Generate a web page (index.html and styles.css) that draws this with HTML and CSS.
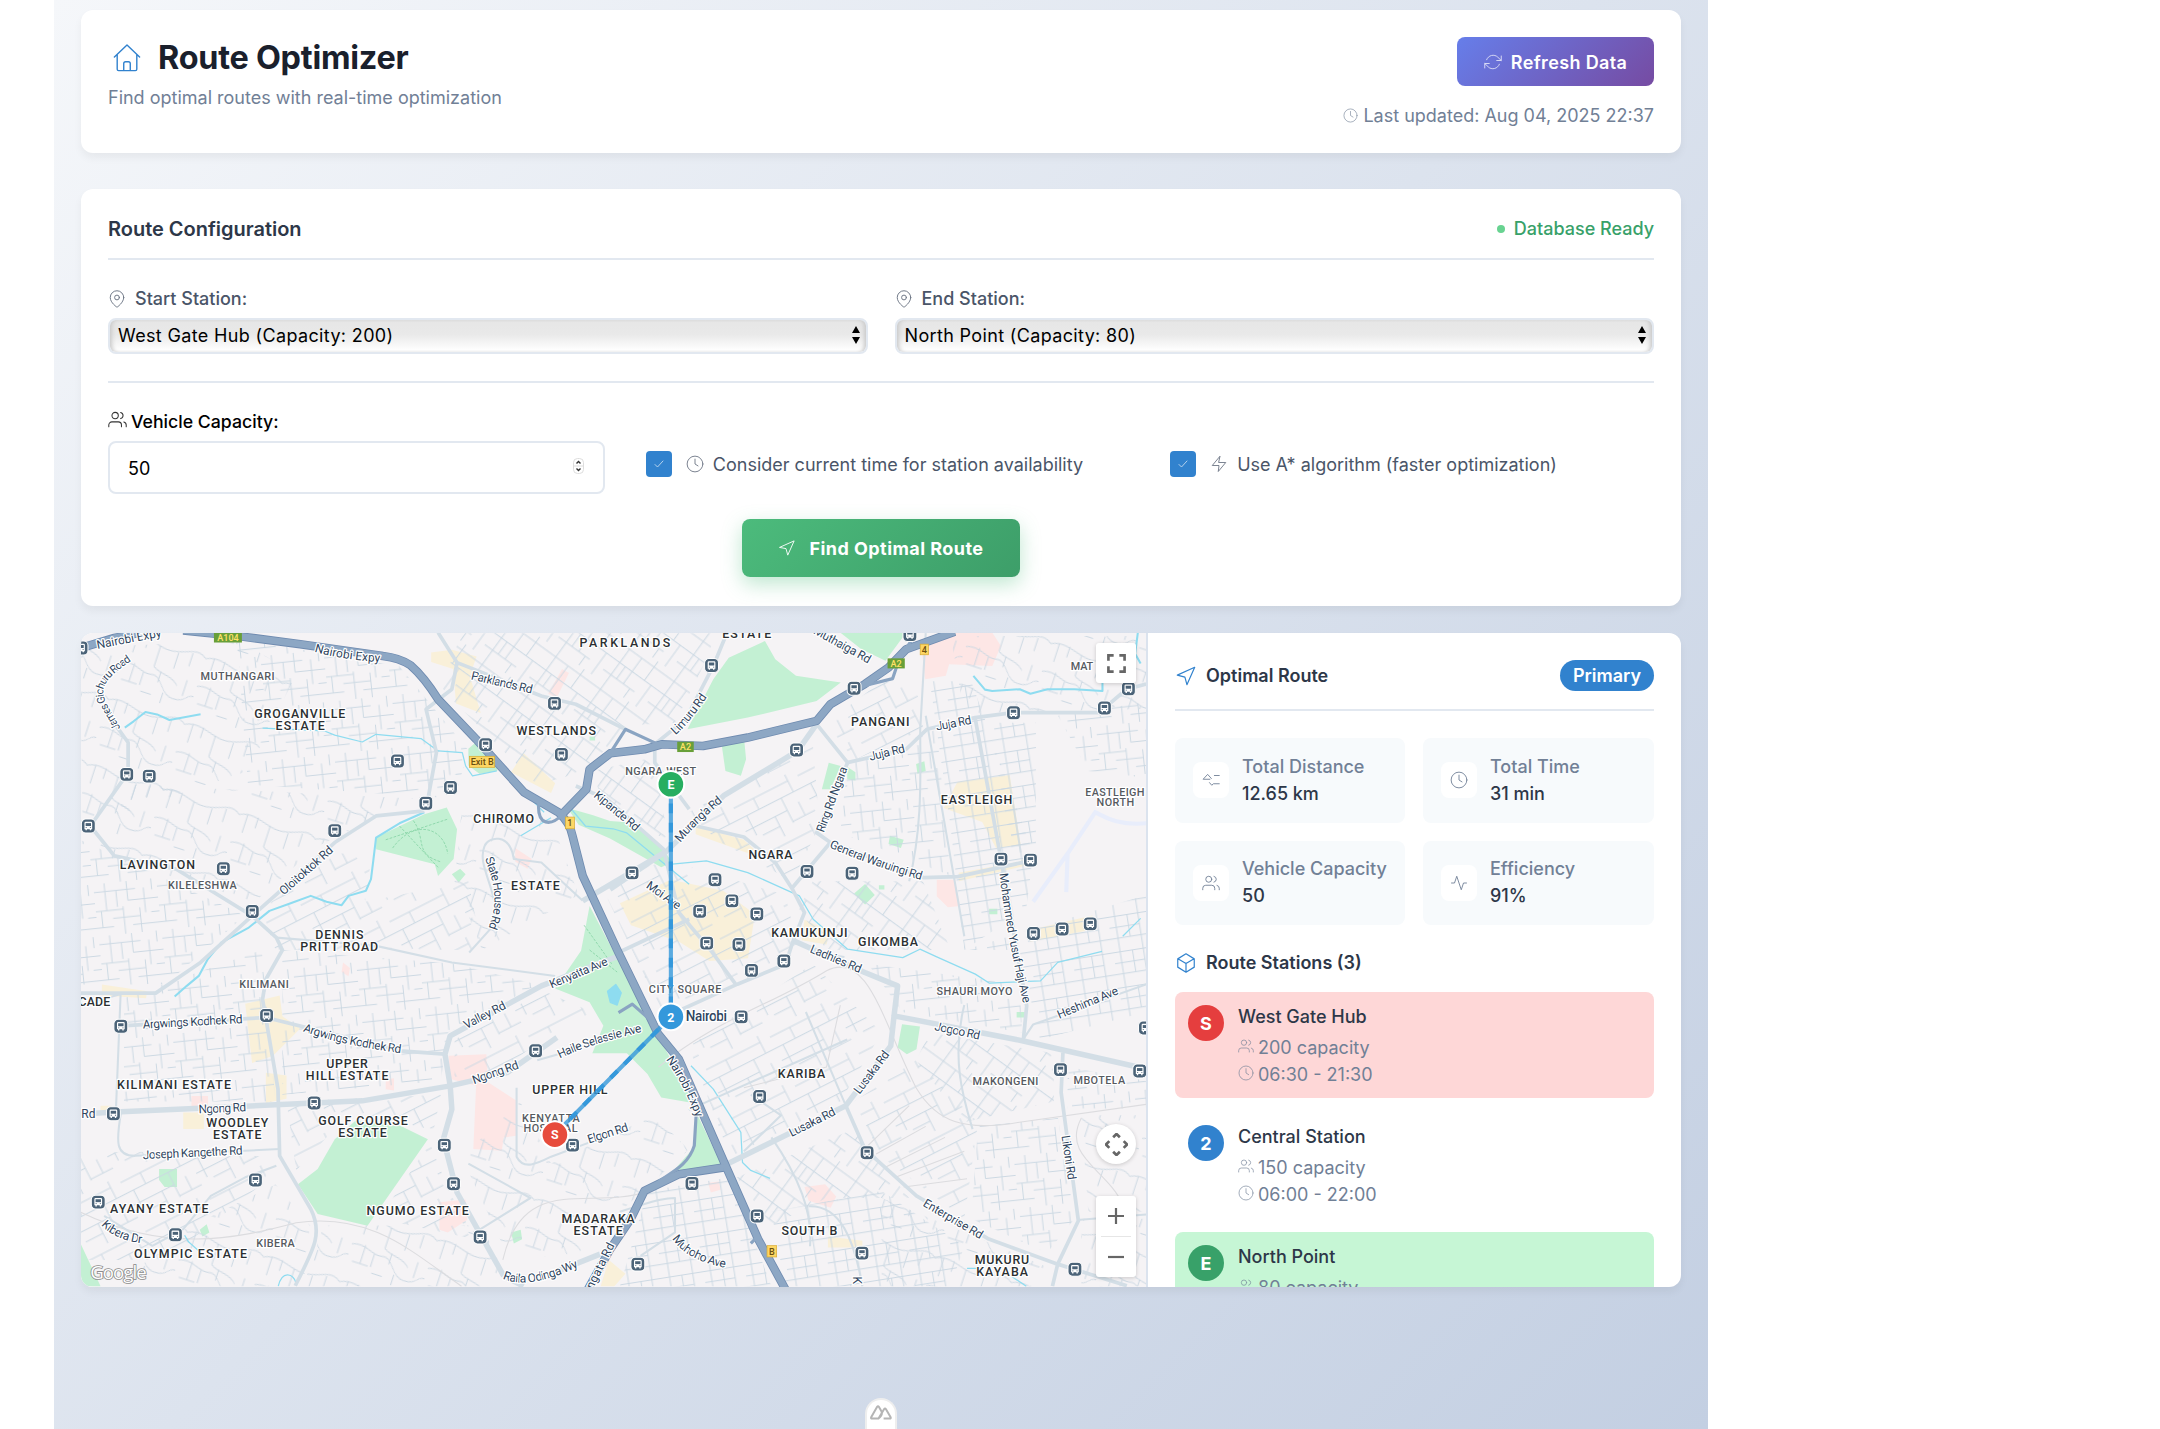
FILE: index.html
```html
<!DOCTYPE html>
<html lang="en">
<head>
<meta charset="utf-8">
<title>Route Optimizer</title>
<link rel="stylesheet" href="styles.css">
</head>
<body>
<svg class="sprite" aria-hidden="true">
  <symbol id="i-home" viewBox="0 0 30 30"><path d="M1.5 14 15 1l13.500 13M4.500 11.500V27a1.500 1.500 0 0 0 1.500 1.500h18a1.500 1.500 0 0 0 1.500-1.500V11.500M11.500 28.500V21a2 2 0 0 1 2-2h3a2 2 0 0 1 2 2v7.500"/></symbol>
  <symbol id="i-refresh" viewBox="0 0 24 24"><path d="M23 4v6h-6M1 20v-6h6M3.500 9a9 9 0 0 1 14.900-3.400L23 10M1 14l4.600 4.400A9 9 0 0 0 20.500 15"/></symbol>
  <symbol id="i-clock" viewBox="0 0 24 24"><circle cx="12" cy="12" r="10.500"/><path d="M12 5.500V12l4 2.500"/></symbol>
  <symbol id="i-pin" viewBox="0 0 24 24"><path d="M21 10c0 7-9 13-9 13s-9-6-9-13a9 9 0 0 1 18 0z"/><circle cx="12" cy="10" r="3.200"/></symbol>
  <symbol id="i-users" viewBox="0 0 24 24"><path d="M17 21v-2a4 4 0 0 0-4-4H5a4 4 0 0 0-4 4v2M23 21v-2a4 4 0 0 0-3-3.870M16 3.130a4 4 0 0 1 0 7.750"/><circle cx="9" cy="7" r="4"/></symbol>
  <symbol id="i-bolt" viewBox="0 0 24 24"><path d="M13 2 3 14h9l-1 8 10-12h-9z"/></symbol>
  <symbol id="i-nav" viewBox="0 0 24 24"><path d="m2.500 11 19-8.500-8.500 19-2.200-8.200z"/></symbol>
  <symbol id="i-check" viewBox="0 0 24 24"><path d="m4 13 5 5L20 6"/></symbol>
  <symbol id="i-box" viewBox="0 0 24 24"><path d="M21 16.500v-9L12 2 3 7.500v9L12 22zM3.200 7.300 12 12.500l8.800-5.200M12 22v-9.500"/></symbol>
  <symbol id="i-pulse" viewBox="0 0 24 24"><path d="M22 12h-4l-3 9L9 3l-3 9H2"/></symbol>
  <symbol id="i-distance" viewBox="0 0 24 24"><path d="M10.500 11H1.500L7.500 4.500l5 5.500M16.500 6H23M10 15.500l3 3.500 2.200-2H23"/></symbol>
</svg>

<main class="app">
  <header class="card head">
    <div>
      <h1 class="title"><svg class="ico ico-home"><use href="#i-home"/></svg>Route Optimizer</h1>
      <p class="subtitle">Find optimal routes with real-time optimization</p>
    </div>
    <div class="head-side">
      <button class="btn btn-refresh"><svg class="ico"><use href="#i-refresh"/></svg>Refresh Data</button>
      <p class="updated"><svg class="ico"><use href="#i-clock"/></svg>Last updated: Aug 04, 2025 22:37</p>
    </div>
  </header>

  <section class="card config">
    <div class="config-head">
      <h2>Route Configuration</h2>
      <span class="ready"><i class="dot"></i>Database Ready</span>
    </div>
    <div class="stations">
      <div class="field">
        <span class="label"><svg class="ico"><use href="#i-pin"/></svg>Start Station:</span>
        <div class="select">West Gate Hub (Capacity: 200)<svg class="arrows" viewBox="0 0 8 18"><path d="M4 0l4 7H0zM4 18l4-7H0z"/></svg></div>
      </div>
      <div class="field">
        <span class="label"><svg class="ico"><use href="#i-pin"/></svg>End Station:</span>
        <div class="select">North Point (Capacity: 80)<svg class="arrows" viewBox="0 0 8 18"><path d="M4 0l4 7H0zM4 18l4-7H0z"/></svg></div>
      </div>
    </div>
    <div class="options">
      <div class="field">
        <span class="label label-dark"><svg class="ico"><use href="#i-users"/></svg>Vehicle Capacity:</span>
        <div class="number">50<svg class="spin" viewBox="0 0 11 16"><rect x=".5" y=".5" width="10" height="15" rx="4"/><path class="mid" d="M1 8h9"/><path d="M3.500 5.500l2-2 2 2M3.500 10.500l2 2 2-2"/></svg></div>
      </div>
      <label class="check"><span class="tick"><svg class="ico"><use href="#i-check"/></svg></span><svg class="ico"><use href="#i-clock"/></svg>Consider current time for station availability</label>
      <label class="check"><span class="tick"><svg class="ico"><use href="#i-check"/></svg></span><svg class="ico"><use href="#i-bolt"/></svg>Use A* algorithm (faster optimization)</label>
    </div>
    <button class="btn btn-find"><svg class="ico"><use href="#i-nav"/></svg>Find Optimal Route</button>
  </section>

  <section class="result">
    <div class="map">
      <svg class="map-canvas" viewBox="58.800 459.900 773.100 474.700" preserveAspectRatio="none">
        <defs>
          <pattern id="st-a" width="46" height="38" patternUnits="userSpaceOnUse" patternTransform="rotate(-6)"><path d="M0 6h30M8 0v20M16 6v12M24 0v14h22M36 6v18M0 20h20M4 20v12M20 18v20M12 26h20M32 20v18M40 24h6M26 32h20M0 32h12M42 0v8"/></pattern>
          <pattern id="st-b" width="40" height="36" patternUnits="userSpaceOnUse" patternTransform="rotate(36)"><path d="M0 5h40M0 17h40M0 28h28M7 0v36M18 5v23M29 0v17M35 17v19M12 17v11M24 28v8"/></pattern>
          <pattern id="st-c" width="58" height="50" patternUnits="userSpaceOnUse" patternTransform="rotate(18)"><path d="M0 9c12-6 22 4 34 2s16-8 24-2M6 7v14M14 7v8M24 10v16c6 4 14 2 20 8M38 11v12M48 8v10M0 30c10-4 16 4 24 2s10 12 20 12 8-6 14-6M10 28v14M18 32v10M30 36v-8M36 42v8M50 40v-12M4 42h12M28 46h-8"/></pattern>
          <pattern id="st-d" width="30" height="26" patternUnits="userSpaceOnUse" patternTransform="rotate(-9)"><path d="M0 4h30M0 12h22M0 20h30M5 0v26M14 4v16M22 0v26"/></pattern>
          <pattern id="st-e" width="52" height="40" patternUnits="userSpaceOnUse" patternTransform="rotate(-27)"><path d="M0 5h44M0 14h52M6 14v16M0 24h34M16 5v9M24 24v16M34 14v20M44 0v14M34 33h18M10 32h14M44 22v11"/></pattern>
          <g id="bus" transform="scale(.56) translate(-.5 -.5)"><rect x="1" y="1" width="18" height="18" rx="5.500" class="bus-bg"/><path class="bus-body" d="M6.500 4.500h7a1.500 1.500 0 0 1 1.500 1.500v8h-1.300v1.500h-1.800V14H8.100v1.500H6.300V14H5V6a1.500 1.500 0 0 1 1.500-1.500z"/><path class="bus-win" d="M6.500 6.200h7v3.800h-7z"/><path class="bus-win" d="M6.500 11.500h1.500v1H6.500zM12 11.500h1.500v1H12z"/></g>
        </defs>
        <rect class="land" x="58" y="459" width="775" height="476"/>

        <g class="shop">
          <path d="M313 474l15-2 18 5-5 14 8 27-18-7-2-25-16-5zM380 547l23 22-3 7-29-15zM450 656l37-17 38 8 23 17-5 32-28 2-22-14-35-12zM695 568l38-5 8 51-18 2-10-19-28-10zM696 634l44-8 8-6 0 8-52 12zM178 729l25-6 2 15 13 9-20 20-15 5zM193 779l15 2v17l-15 3zM74 715l33 5-1 5-32-2zM133 808h15v12h-15zM601 898l25 3v5h-25zM745 676l48-11 1 10-46 9zM584 668l18 8-2 10-18-3zM505 600l35 10 15 14-50-18zM73 803h8v6h-8zM442 915l12 10-8 9h-10z"/>
        </g>
        <g class="care">
          <path d="M669 471.700L692.800 459.600H720.300L726.600 469.300 720.300 483.800 689 482.600 686.600 491 671.600 493.500zM398 504l10-18 5 3-9 18zM325.600 766.800L353 765.600 354.300 786 375 799.500V824.900L365.600 826 364.300 835.700 343.600 834.500 345.600 788.600 326.800 783.700zM319 873l19-2 1 15-14 9-6-2zM584 862l15-2 8 9-4 8-16-5zM680 639h13l4 19-9 1-8-8zM374 616l12 8-3 7-9-5zM139 796h12v8h-12zM280 784l6-1v9l-6-1zM514 859l8-1 1 6-7 2zM249 699l5 4-1 6-5-3z"/>
        </g>
        <g class="park">
          <path d="M529 477.800L555.300 465.700 562.800 479 577.800 491 610.300 495.900 592.800 509.200 542.800 521.300 499 529.800 517.800 493.500zM610 459.600H657.800L642.800 480 625.300 471.700zM524 541.900L540.300 538.200 541.600 551.500 537.800 563.600 526.600 560zM273 608.400L308 591.500 324.300 586.600 331.800 602.300 329.300 624 318 636.200 315.600 627.700 273 616.900zM328 635l6-4 4 4-5 6zM428 658L450 700 478 752 500 795 503 801 480 797 470 780 455 765 430 765 438 745 428 728 403 718 421.800 690.600zM506.600 810.300L524 846.600 487.800 851.500 502.800 834.500zM412 587L430 592 442.800 596.300 457.800 597.500 480 614.400 487.800 626.500 480 630 442.800 609 420 599zM601.600 554L610.300 556.400 602.800 573.300 596.600 573.300zM615 557l6 4v6l-6-1zM243 827.300L258 814 290.600 817.600 310.600 827.300 266.800 890.200 230.600 881.700 216.300 860 230.600 849zM115.500 849h13v13h-9l-4-5zM58 902l15 32H58zM654.800 743.800L667.800 745.500 665.300 762 658.300 765.600 651.600 760.800zM646 607l10 3-2 6-9-3zM620 649l8-7 7 8-7 7zM665 555l6-2 1 7-6 2zM738 735h7v4h-7zM718 660h6v4h-6zM145 893l5-4 2 6-5 3zM340 544l7-6 14 14v8l-13 2-8-6zM371 895l7-2 1 7-6 3zM428 535h4v3h-4zM638 643h4v3h-4z"/>
        </g>
        <g class="streets">
          <path fill="url(#st-c)" d="M58 470L175 466 215 490 180 560 60 600z"/>
          <path fill="url(#st-a)" d="M172 464L290 484 340 545 330 580 180 570z"/>
          <path fill="url(#st-b)" d="M335 460H520L510 485 490 525 455 527 425 560 390 570 320 500z"/>
          <path fill="url(#st-c)" d="M95 570L300 580 230 615 185 655 70 620z"/>
          <path fill="url(#st-a)" d="M58 610L178 665 120 715H58z"/>
          <path fill="url(#st-e)" d="M190 660L245 620 270 620 265 655 340 640 350 690 200 690z"/>
          <path fill="url(#st-a)" d="M205 690L330 700 390 715 325 750 320 785 205 795z"/>
          <path fill="url(#st-a)" d="M90 725L190 690 200 800H90z"/>
          <path fill="url(#st-e)" d="M58 840L90 836 200 840 190 860 120 915H58z"/>
          <path fill="url(#st-c)" d="M120 900L200 860 225 890 220 934H90z"/>
          <path fill="url(#st-c)" d="M235 890L350 890 370 934H220z"/>
          <path fill="url(#st-e)" d="M208 800L320 795 315 820 250 812 215 850z"/>
          <path fill="url(#st-e)" d="M275 885L312 830 326 865 345 900z"/>
          <path fill="url(#st-e)" d="M330 755L395 720 430 735 400 750 360 780 330 782z"/>
          <path fill="url(#st-c)" d="M335 840L378 800 400 845 475 810 500 835 450 880 420 910 370 915z"/>
          <path fill="url(#st-c)" d="M335 590L400 595 420 650 350 690 330 640z"/>
          <path fill="url(#st-e)" d="M435 640L485 625 570 650 580 690 480 735z"/>
          <path fill="url(#st-b)" d="M430 560L475 550 485 610 440 590z"/>
          <path fill="url(#st-e)" d="M500 590L590 540 595 600 575 640 520 610z"/>
          <path fill="url(#st-b)" d="M590 640L670 640 690 690 600 690 580 660z"/>
          <path fill="url(#st-e)" d="M600 525L640 495 670 500 670 530 620 552z"/>
          <path fill="url(#st-a)" d="M615 555L680 530 690 636 610 605z"/>
          <path fill="url(#st-d)" d="M675 495H705L750 620 745 660 700 690 690 600z"/>
          <path fill="url(#st-c)" d="M690 462H832V515L700 518z"/>
          <path fill="url(#st-d)" d="M718 525L752 525 752 618 735 620z"/>
          <path fill="url(#st-a)" d="M768 520L832 510V565L790 560z"/>
          <path fill="url(#st-d)" d="M700 690L832 650V735L755 755 740 690z"/>
          <path fill="url(#st-a)" d="M630 700L740 715 742 750 655 735z"/>
          <path fill="url(#st-b)" d="M675 750L765 765V800L700 815 665 770z"/>
          <path fill="url(#st-e)" d="M500 760L590 700 640 750 610 800 530 840z"/>
          <path fill="url(#st-a)" d="M775 775L832 785V805H775z"/>
          <path fill="url(#st-e)" d="M620 800L665 770 710 815 700 885 640 840z"/>
          <path fill="url(#st-a)" d="M710 818L768 812 780 885 760 910 705 885z"/>
          <path fill="url(#st-b)" d="M535 855L620 820 660 870 600 870 560 890z"/>
          <path fill="url(#st-d)" d="M560 880L640 865 700 905 690 934 570 934z"/>
          <path fill="url(#st-d)" d="M470 865L530 855 560 934H450z"/>
          <path fill="url(#st-c)" d="M640 870L760 920 750 934H640zM785 885H832V934H785zM785 810H832V880H790z"/>
        </g>
        <g class="rail">
          <path d="M478 775C520 740 560 730 600 705 630 690 640 740 665 790 680 815 700 822 740 815L832 802M58 880C120 910 170 900 215 888 270 880 300 910 335 934M365 915C380 850 430 880 470 865M610 730L600 775 540 790M785 812C770 840 805 850 815 875"/>
          <path d="M630 832L660 803M636 838L672 818M642 848L686 826M650 855L700 836M656 862L702 856"/>
        </g>
        <g class="runway"><path d="M832 598C810 600 800 592 795 590L775 620 774 648M775 620L750 655"/></g>
        <g class="paths"><path d="M280 610L325 595M285 616C300 595 322 600 325 620M290 600L318 630M300 596C310 610 300 620 320 626M424 672L444 700M428 690L448 706"/></g>

        <g class="water">
          <path d="M90.600 528.600L97 524 105.600 517.200 114 519 123 523 145.600 518.900" class="w2"/>
          <path d="M190.600 529L235.600 531 243 534 263 539 273 533.400 305.600 536.500 318 545.500 335.600 546.700 338 556.400 343 563.600 360.600 560"/>
          <path class="w2" d="M308 590L290 598 273 608.400 271 625 269.300 638.600 265.600 647 253 650.700 248 657.500 237 655 225.600 650.700 211 656 195.600 661.600 180.600 673.700 160.600 684.600 150.600 697 144.300 708.800 135.600 716 126.800 723.700"/>
          <path class="w2" d="M706.600 491L715 501 720.300 502 740.300 500.700 748 504 760.300 500.700 780 500.700 800.300 502 800.300 496M826 459.500L824 475 828 482"/>
          <path d="M380 575L395 590M378 607L400 594M415 588L425 600 445 602 455 605 475.300 621.700 500.300 642.300M487.800 627.700L512.800 625.300 542.800 633.800 580.300 650.700 590.300 667.700 615.300 689.400 655.300 695.500 667.800 689.400 680 695 708 707.500 718 714 755.300 712.400 767.800 699 800 691M815 680L828 667"/>
          <path d="M501.600 774L517.800 791 537.800 822.400 539 844.200 545 850 559 855.800M134 897L137 902 145 909M202 934C205 922 213 925 215 932M702 921H712M733 926L745 934"/>
          <path class="pond" d="M441 720l6-5 4 6-3 9-5-2z"/>
        </g>

        <g class="roads thin">
          <path d="M340.600 691.800L358 672.500M358 672.500C365 650 345 630 351.800 614.400 354 608 370 604 373 624L393 626.500 423 654.300M88 807C84 830 84 839.400 98 839.400L203 834.500M200.600 846.600L178 855 153 868.400 133 892.600 110.600 904.700 75.600 883M87.600 720.800L84 810M200.600 681L273 687 328 699 403 708.800M540 836L567 810 545 795M560 826C580 855 590 880 588 905M587 876C610 875 620 900 626 934M500 806L615 755M585 735L614 803M375 790V840C380 850 390 845 400 840L427 830M450 880C480 870 485 870 490 870V895L465 912M390 770L404 766 440 755M340 845L385 870 345 895M58 730L88 722M742 756L750 744 832 715M700 730C690 770 700 800 706 820M660 640C670 600 668 560 668 530L672 460M782 886L832 882M672 520L700 680M592 692L613 695"/>
        </g>
        <g class="roads">
          <path d="M84.300 527.300L93 539.400V561.200L65.600 600 83 621.700 128 631.400 183 665.200 200.600 681 205 690 193 711.200 190.600 725.700 201.800 791 203 839.400 225.600 878 C234 895 229 905 214.300 933.700"/>
          <path d="M308 589L273 592.700 243 612 183 665.200 145.600 699 113 721.300H58"/>
          <path d="M318 459.600L331.800 481.400 328 500.700 309.300 515.300 316.800 546.700 309.300 587.800M331.800 481.400L393 505.600 418 511.600 454 529.800"/>
          <path d="M527.800 459.600L517.800 483.800 497.800 522.500 475.300 540.700V554L500.300 587.800"/>
          <path class="wide" d="M592.800 526L579 545.500 525.300 578 482.800 619.300M442.800 645.900L481 620 423 654.300"/>
          <path d="M418 571L440 580 481.600 616.800 492.800 662.800 515.300 689.400 534 714.800M449 691.800L500.300 667.700M490 735.400L535.300 714.800 570.300 700.300 575.300 684.600 584 662.800 575.300 645.900 562.800 626.500 540 608 505.300 600M575 645L602.800 612 592.800 604.800 615.300 554 592.800 526"/>
          <path d="M615 554L657.800 544.300 672.800 529.800 707.800 521.300 735.300 517.700H797.800L817.800 500.700 832 497M602.800 612L670.300 637.400 695.300 636.700 747.800 625.300"/>
          <path d="M707.800 521.300L726.600 624 745.300 730.500 742.800 756"/>
          <path class="wide" d="M576.500 683.400L627.800 706.300 651.600 716 649 737.800 742.800 756 832.800 776.500M649 737.800L646.600 759.600 614 803 525.300 846.600"/>
          <path d="M614 803L627.800 834.500 665.300 868.400 717.800 899.800 767.800 918 818 933.700M771.600 764.400L770.300 793.400 782.800 886.500 767.800 918 764 934"/>
          <path class="wide" d="M58 809L88 807.400 263 799.500 326.800 788.600 368 779 404.300 753.500"/>
          <path d="M88 745L193 739 290.600 763.200 323 765.600"/>
          <path class="wide" d="M450 694L393 716 326.800 752.300 323 765.600 326.800 788.600 328 805.500 321.800 827.300 331.800 866 365.600 926.500M365.600 926.500L380 934M400 925L435.600 910.700"/>
        </g>
        <g class="hwy-edge">
          <path id="hwy" d="M58 471L83 463.500 110 458M133 458L175.600 462.500 218 468 278 476.600Q290 478 298 483.300 308 492 318 508L345.600 537 380.600 575.700 405.600 590.200Q414 598 415.600 607.200L423 636.200 447.800 689.400 477.800 751 492.800 769.200 527.800 849 550.300 899.800 570 936"/>
          <path id="hwy2" d="M408 591.400L425.600 573.300 428 558.800 443 547.200 467.800 544.300 480.300 540.700 510.300 541.900 542.800 535.800 592.800 523.700 602.800 511.600 627.800 497 645 485 657.800 471.700 693 459M525.300 847.800L492.800 852.700 467.800 864.800 457.800 885.300 443 907 427 936"/>
          <path class="slim" d="M444 545.500L454 529.800 477.800 540.700M505.300 810.300L504 832C500 845 490 850 478 858M449 735.400L459 729.300 472.800 741.400M628 498L648 493 653 478 664 462M391 584C390 600 400 600 408 592M550 898L545 903"/>
        </g>
        <g class="hwy">
          <use href="#hwy"/><use href="#hwy2"/>
        </g>

        <g class="stops">
          <use href="#bus" x="53.500" y="465.500"/><use href="#bus" x="86.700" y="557.200"/><use href="#bus" x="103" y="558.500"/><use href="#bus" x="58.800" y="594.700"/><use href="#bus" x="156.800" y="625.700"/><use href="#bus" x="177.800" y="656.700"/><use href="#bus" x="237.700" y="598"/><use href="#bus" x="283.200" y="547.500"/><use href="#bus" x="303.800" y="578.200"/><use href="#bus" x="321.700" y="566.700"/><use href="#bus" x="347.200" y="535.700"/><use href="#bus" x="397.200" y="505.700"/><use href="#bus" x="402.200" y="542.700"/>
          <use href="#bus" x="511.200" y="478.200"/><use href="#bus" x="655.200" y="455.700"/><use href="#bus" x="614.700" y="494.700"/><use href="#bus" x="572.900" y="539.500"/><use href="#bus" x="730.400" y="512.500"/><use href="#bus" x="796.400" y="509"/><use href="#bus" x="813.800" y="495"/><use href="#bus" x="453.500" y="628.700"/><use href="#bus" x="513.700" y="633.700"/><use href="#bus" x="502.600" y="656.500"/><use href="#bus" x="526" y="649"/><use href="#bus" x="544.100" y="658.500"/><use href="#bus" x="580.500" y="627.700"/><use href="#bus" x="613.200" y="629"/><use href="#bus" x="721.300" y="618.700"/><use href="#bus" x="742.700" y="619.400"/><use href="#bus" x="507.700" y="679.700"/><use href="#bus" x="531.100" y="680.700"/><use href="#bus" x="563.700" y="692.700"/><use href="#bus" x="540.200" y="699.500"/><use href="#bus" x="744.900" y="672.700"/><use href="#bus" x="765.700" y="669.400"/><use href="#bus" x="786.100" y="665.700"/><use href="#bus" x="532.700" y="733.200"/>
          <use href="#bus" x="82.400" y="740"/><use href="#bus" x="188.200" y="732.200"/><use href="#bus" x="77" y="803.500"/><use href="#bus" x="222.700" y="795.700"/><use href="#bus" x="383.500" y="757.800"/><use href="#bus" x="317.200" y="826.300"/><use href="#bus" x="410.300" y="826.300"/><use href="#bus" x="323.900" y="854.300"/><use href="#bus" x="180.100" y="851.600"/><use href="#bus" x="66" y="867.700"/><use href="#bus" x="122" y="891.400"/><use href="#bus" x="343.200" y="893"/>
          <use href="#bus" x="546.100" y="791"/><use href="#bus" x="497" y="854.200"/><use href="#bus" x="544.300" y="877.700"/><use href="#bus" x="624.100" y="831.800"/><use href="#bus" x="764.500" y="771.500"/><use href="#bus" x="822" y="772.500"/><use href="#bus" x="826.200" y="741.300"/><use href="#bus" x="457.700" y="912.700"/><use href="#bus" x="620.400" y="904.700"/><use href="#bus" x="775" y="916.400"/>
        </g>

        <g class="labels">
          <text x="420.600" y="469.800" textLength="66">PARKLANDS</text><text x="524.300" y="463.500" textLength="35.500">ESTATE</text>
          <text x="184.600" y="521.800" textLength="66">GROGANVILLE</text><text x="200" y="530.500" textLength="35.800">ESTATE</text>
          <text x="375" y="534.100" textLength="57.600">WESTLANDS</text><text x="343.600" y="598" textLength="44">CHIROMO</text>
          <text x="87" y="630.900" textLength="54.600">LAVINGTON</text><text x="371" y="646.600" textLength="35.300">ESTATE</text>
          <text x="228.800" y="681.700" textLength="35">DENNIS</text><text x="218" y="690.400" textLength="56.500">PRITT ROAD</text>
          <text x="617.800" y="527.600" textLength="42.500">PANGANI</text><text x="683" y="583.700" textLength="51.800">EASTLEIGH</text>
          <text x="543.300" y="624.100" textLength="32">NGARA</text><text x="559.800" y="680.200" textLength="55.500">KAMUKUNJI</text>
          <text x="622.800" y="687.200" textLength="43.500">GIKOMBA</text><text x="57" y="730.800" textLength="23">CADE</text>
          <text x="236.800" y="776" textLength="30.200">UPPER</text><text x="222" y="784.700" textLength="60">HILL ESTATE</text>
          <text x="85" y="791" textLength="82.600">KILIMANI ESTATE</text><text x="149.800" y="818.600" textLength="45">WOODLEY</text>
          <text x="154.600" y="827.300" textLength="35.200">ESTATE</text><text x="231" y="816.900" textLength="65">GOLF COURSE</text>
          <text x="245.600" y="825.600" textLength="35.200">ESTATE</text><text x="79.800" y="881.200" textLength="71.500">AYANY ESTATE</text>
          <text x="266" y="882.400" textLength="74.300">NGUMO ESTATE</text><text x="97.300" y="913.900" textLength="82">OLYMPIC ESTATE</text>
          <text x="386.300" y="794.600" textLength="54.700">UPPER HILL</text><text x="407.600" y="888.200" textLength="53.200">MADARAKA</text>
          <text x="416.300" y="896.700" textLength="35.700">ESTATE</text><text x="564.600" y="783" textLength="34.400">KARIBA</text>
          <text x="567.300" y="896.500" textLength="40.500">SOUTH B</text><text x="707.600" y="918" textLength="39.400">MUKURU</text>
          <text x="708.600" y="926.700" textLength="37.700">KAYABA</text>
        </g>
        <g class="labels minor">
          <text x="145.600" y="493.700" textLength="53.700">MUTHANGARI</text><text x="122" y="645.600" textLength="49.800">KILELESHWA</text>
          <text x="777.300" y="486.500" textLength="16.200">MAT</text><text x="453.800" y="562.700" textLength="51.500">NGARA WEST</text>
          <text x="787.800" y="577.900" textLength="43">EASTLEIGH</text><text x="796" y="585.400" textLength="27.300">NORTH</text>
          <text x="173.600" y="717.700" textLength="36">KILIMANI</text><text x="186" y="905.400" textLength="28">KIBERA</text>
          <text x="379" y="814.500" textLength="41.800">KENYATTA</text><text x="380" y="822" textLength="39.300">HOSPITAL</text>
          <text x="471" y="721" textLength="52.600">CITY SQUARE</text><text x="679.800" y="722.800" textLength="55.200">SHAURI MOYO</text>
          <text x="706" y="788" textLength="47.800">MAKONGENI</text><text x="779.300" y="786.900" textLength="37.500">MBOTELA</text>
        </g>
        <g class="road-names">
          <defs>
            <path id="n1" d="M70.800 471.500L125 461"/><path id="n2" d="M228.200 473.500Q250 480 285 481.500"/>
            <path id="n3" d="M87.500 529C80 516 74 508 75 501 77 492 88 485 101 476"/><path id="n4" d="M341.500 493.500L395 506"/>
            <path id="n5" d="M206 650.500L250 611.500"/><path id="n6" d="M352 623.500C358 640 364 655 352 680"/>
            <path id="n7" d="M430.500 578.500L470 611.500"/><path id="n8" d="M490.500 534Q503 523 520 496"/>
            <path id="n9" d="M590 460L640 487.500"/><path id="n10" d="M680 530.700L715 524"/><path id="n11" d="M631.700 552.600L665 544.500"/>
            <path id="n12" d="M598 605L619 548"/><path id="n13" d="M494 612Q505 598 530 578"/><path id="n14" d="M602 615.500Q632 629 680 642.500"/>
            <path id="n15" d="M468.500 644.500L500 666.500"/><path id="n16" d="M725.500 634.500Q732 690 747 745"/><path id="n17" d="M587.500 691.500L634 711"/>
            <path id="n18" d="M400.300 718L450 697"/><path id="n19" d="M338.500 747.500L375 728.500"/><path id="n20" d="M103.800 747L185 742.500"/>
            <path id="n21" d="M220 749Q250 760 300 766"/><path id="n22" d="M406.500 768.700Q430 757 475 747.500"/><path id="n23" d="M144.300 808.500L190 806.500"/>
            <path id="n24" d="M344 787.400L385 773"/><path id="n25" d="M103.800 841.800L185 838"/><path id="n26" d="M73.500 889.500Q84 902 110 903.500"/>
            <path id="n27" d="M427.500 830.500L465 818.500"/><path id="n28" d="M428 941L449 899"/><path id="n29" d="M365 928.500Q385 938 428 916"/>
            <path id="n30" d="M483.500 769.500Q500 793 508 820"/><path id="n31" d="M624 795L652 758"/><path id="n32" d="M574.500 825.800L614 806"/>
            <path id="n33" d="M678 748L720 757"/><path id="n34" d="M769 740L820 718.500"/><path id="n35" d="M770.500 825L777 868"/>
            <path id="n36" d="M669.500 875.500L720 905"/><path id="n37" d="M488 899.500Q500 918 536 922"/><path id="n38" d="M619.500 927V945"/>
          </defs>
          <text><textPath href="#n1" textLength="47.500">Nairobi Expy</textPath></text><text><textPath href="#n2" textLength="48.500">Nairobi Expy</textPath></text>
          <text class="tight"><textPath href="#n3" textLength="61">James Gichuru Road</textPath></text><text><textPath href="#n4" textLength="45.500">Parklands Rd</textPath></text>
          <text><textPath href="#n5" textLength="48.500">Oloitoktok Rd</textPath></text><text><textPath href="#n6" textLength="52">State House Rd</textPath></text>
          <text><textPath href="#n7" textLength="40">Kipande Rd</textPath></text><text><textPath href="#n8" textLength="36">Limuru Rd</textPath></text>
          <text><textPath href="#n9" textLength="46">Muthaiga Rd</textPath></text><text><textPath href="#n10" textLength="26">Juja Rd</textPath></text>
          <text><textPath href="#n11" textLength="26.500">Juja Rd</textPath></text><text><textPath href="#n12" textLength="50">Ring Rd Ngara</textPath></text>
          <text><textPath href="#n13" textLength="43">Murang'a Rd</textPath></text><text><textPath href="#n14" textLength="71">General Waruingi Rd</textPath></text>
          <text><textPath href="#n15" textLength="28.500">Moi Ave</textPath></text><text><textPath href="#n16" textLength="96">Mohammed Yusuf Haji Ave</textPath></text>
          <text><textPath href="#n17" textLength="39.500">Ladhies Rd</textPath></text><text><textPath href="#n18" textLength="45">Kenyatta Ave</textPath></text>
          <text><textPath href="#n19" textLength="33">Valley Rd</textPath></text><text><textPath href="#n20" textLength="72.500">Argwings Kodhek Rd</textPath></text>
          <text><textPath href="#n21" textLength="73">Argwings Kodhek Rd</textPath></text><text><textPath href="#n22" textLength="63">Haile Selassie Ave</textPath></text>
          <text><textPath href="#n23" textLength="34.500">Ngong Rd</textPath></text><text><textPath href="#n24" textLength="35">Ngong Rd</textPath></text>
          <text><textPath href="#n25" textLength="72.500">Joseph Kangethe Rd</textPath></text><text><textPath href="#n26" textLength="33">Kibera Dr</textPath></text>
          <text><textPath href="#n27" textLength="30.500">Elgon Rd</textPath></text><text><textPath href="#n28" textLength="41">angata Rd</textPath></text>
          <text><textPath href="#n29" textLength="57.500">Raila Odinga Wy</textPath></text><text><textPath href="#n30" textLength="47.500">Nairobi Expy</textPath></text>
          <text><textPath href="#n31" textLength="36.500">Lusaka Rd</textPath></text><text><textPath href="#n32" textLength="36.500">Lusaka Rd</textPath></text>
          <text><textPath href="#n33" textLength="33.500">Jogoo Rd</textPath></text><text><textPath href="#n34" textLength="47">Heshima Ave</textPath></text>
          <text><textPath href="#n35" textLength="32.500">Likoni Rd</textPath></text><text><textPath href="#n36" textLength="48.500">Enterprise Rd</textPath></text>
          <text><textPath href="#n37" textLength="45">Muhoho Ave</textPath></text><text><textPath href="#n38">K</textPath></text>
          <text x="59" y="812">Rd</text>
          <text class="city" x="497.800" y="741.700" textLength="30">Nairobi</text>
        </g>

        <g class="shields">
          <g class="green"><rect x="155.300" y="459.500" width="20.300" height="7.300"/><rect x="644.300" y="478.300" width="12.500" height="7.300"/><rect x="491.600" y="538.800" width="12" height="7.500"/>
            <text x="165.500" y="465.700">A104</text><text x="650.500" y="484.500">A2</text><text x="497.600" y="545.100">A2</text></g>
          <g class="gold"><rect x="340.900" y="549.400" width="18.200" height="8"/><rect x="410.500" y="593.500" width="6.500" height="8.500"/><rect x="668" y="468" width="6" height="7.700"/><rect x="556.800" y="904.600" width="7" height="8.200"/>
            <text x="350" y="555.900">Exit B</text><text x="413.700" y="600.200">1</text><text x="671" y="474.200">4</text><text x="560.300" y="911.200">B</text></g>
        </g>

        <g class="route">
          <path class="line" d="M487 569.700V738.500L402.800 823.800"/><path class="dash" d="M487 569.700V738.500L402.800 823.800"/>
          <circle cx="487" cy="569.700" r="9.700" fill="#27ae60"/><circle cx="487" cy="738.500" r="9.700" fill="#3498db"/><circle cx="402.800" cy="824" r="9.700" fill="#e74c3c"/>
          <text x="487" y="573">E</text><text x="487" y="741.900">2</text><text x="402.800" y="827.300">S</text>
        </g>
        <text class="brand" x="65.500" y="928.500" textLength="41">Google</text>
      </svg>
      <div class="map-btn map-full"><svg viewBox="0 0 20 20"><path d="M1.500 7V1.500H7M13 1.500h5.500V7M18.500 13v5.500H13M7 18.500H1.500V13"/></svg></div>
      <div class="map-btn map-pan"><svg viewBox="0 0 24 24"><path d="M8.500 4.500 12 1l3.500 3.500M8.500 19.500 12 23l3.500-3.500M4.500 8.500 1 12l3.500 3.500M19.500 8.500 23 12l-3.500 3.500"/></svg></div>
      <div class="map-btn map-zoom"><svg viewBox="0 0 16 16"><path d="M0 8h16M8 0v16"/></svg><svg viewBox="0 0 16 16"><path d="M0 8h16"/></svg></div>
    </div>

    <aside class="panel">
      <div class="panel-head"><h3><svg class="ico blue"><use href="#i-nav"/></svg>Optimal Route</h3><span class="badge">Primary</span></div>
      <div class="stats">
        <div class="stat"><span class="stat-ico"><svg class="ico"><use href="#i-distance"/></svg></span><div><p>Total Distance</p><b>12.65 km</b></div></div>
        <div class="stat"><span class="stat-ico"><svg class="ico"><use href="#i-clock"/></svg></span><div><p>Total Time</p><b>31 min</b></div></div>
        <div class="stat"><span class="stat-ico"><svg class="ico"><use href="#i-users"/></svg></span><div><p>Vehicle Capacity</p><b>50</b></div></div>
        <div class="stat"><span class="stat-ico"><svg class="ico"><use href="#i-pulse"/></svg></span><div><p>Efficiency</p><b>91%</b></div></div>
      </div>
      <h3 class="list-title"><svg class="ico blue"><use href="#i-box"/></svg>Route Stations (3)</h3>
      <div class="list">
        <div class="stop stop-start"><span class="num">S</span><div><h4>West Gate Hub</h4><p><svg class="ico"><use href="#i-users"/></svg>200 capacity</p><p><svg class="ico"><use href="#i-clock"/></svg>06:30 - 21:30</p></div></div>
        <div class="stop"><span class="num">2</span><div><h4>Central Station</h4><p><svg class="ico"><use href="#i-users"/></svg>150 capacity</p><p><svg class="ico"><use href="#i-clock"/></svg>06:00 - 22:00</p></div></div>
        <div class="stop stop-end"><span class="num">E</span><div><h4>North Point</h4><p><svg class="ico"><use href="#i-users"/></svg>80 capacity</p></div></div>
      </div>
    </aside>
  </section>

  <div class="devtab"><svg viewBox="0 0 22 15"><path d="M9 13.500H2.200q-1.700 0-.9-1.500L7 2q1-1.500 2 0l2.300 4M8.500 13.500l5.500-9.200q1-1.500 2 0l4.500 7.700q.8 1.500-.9 1.500h-6M11.300 6q2 4-2.800 7.500"/></svg></div>
</main>
</body>
</html>
```
FILE: styles.css
```css
* { box-sizing: border-box; }
body { margin: 0; height: 1429px; overflow: hidden; background: #fff; font: 400 18px/27px Inter, "Liberation Sans", sans-serif; color: #2d3748; }
h1, h2, h3, h4, p { margin: 0; font-weight: 600; }
p { font-weight: 400; }
.sprite { display: none; }
.ico { width: 18px; height: 18px; fill: none; stroke: currentColor; stroke-width: 1.200; stroke-linecap: round; stroke-linejoin: round; flex: none; overflow: visible; }
.blue { color: #3182ce; }

.app { position: relative; display: flex; flex-direction: column; margin-left: 54px; width: 1654px; height: 1429px; padding: 10px 27px 0; background: linear-gradient(135deg, #f5f7fa 0%, #c3cfe2 100%); }
.card { background: #fff; border-radius: 12px; padding: 27px; box-shadow: 0 5px 8px rgba(0, 0, 0, .05); }
.btn { display: flex; align-items: center; justify-content: center; flex: none; border: 0; color: #fff; font: 600 18px/27px Inter, sans-serif; letter-spacing: .35px; border-radius: 8px; }

/* page header */
.head { display: flex; justify-content: space-between; height: 143px; margin-bottom: 36px; }
.title { display: flex; align-items: center; gap: 17px; padding: 1px 0 0 5px; font-size: 32.400px; font-weight: 700; line-height: 40px; letter-spacing: -.25px; color: #1a202c; }
.ico-home { width: 28px; height: 28px; stroke-width: 1.500; color: #3182ce; }
.subtitle { margin-top: 6px; color: #718096; }
.head-side { display: flex; flex-direction: column; align-items: flex-end; }
.btn-refresh { width: 197px; height: 49px; gap: 9px; padding-top: 2px; background: linear-gradient(135deg, #667eea, #764ba2); }
.btn-refresh .ico { opacity: .8; }
.updated { display: flex; align-items: center; gap: 5px; margin-top: 16px; color: #718096; }
.updated .ico { width: 15px; height: 15px; opacity: .8; }

/* configuration */
.config { height: 417px; margin-bottom: 27px; }
.config-head { display: flex; justify-content: space-between; padding-bottom: 16px; border-bottom: 2px solid #e2e8f0; line-height: 26px; }
.config-head h2 { font-size: 20px; letter-spacing: -.02px; }
.ready { display: flex; align-items: center; gap: 9px; color: #38a169; font-weight: 500; }
.dot { width: 8px; height: 8px; border-radius: 50%; background: #68d391; }
.stations { display: grid; grid-template-columns: 1fr 1fr; gap: 27px; padding: 25px 0 27px; border-bottom: 2px solid #e2e8f0; }
.label { display: flex; align-items: center; gap: 9px; margin-bottom: 6px; color: #4a5568; font-weight: 500; }
.label .ico { opacity: .8; stroke-width: 1.300; }
.label-dark { color: #000; gap: 4px; font-size: 17.700px; }
.label-dark .ico { width: 19px; height: 19px; position: relative; top: -2px; }
.select { display: flex; align-items: center; justify-content: space-between; height: 36px; padding: 0 6px 2px 8px; border: 2px solid #e2e8f0; border-radius: 8px; color: #000; letter-spacing: .35px; background: linear-gradient(#e6e6e6 0%, #e9e9e9 45%, #fff 95%); box-shadow: inset 4px 0 4px -2px #c9c9c9, inset -4px 0 4px -2px #c9c9c9; }
.arrows { width: 8px; height: 18px; }
.options { display: grid; grid-template-columns: repeat(3, 1fr); gap: 27px; padding-top: 25px; align-items: end; }
.number { display: flex; align-items: center; justify-content: space-between; height: 53px; padding: 1px 19px 0 18px; border: 2px solid #e2e8f0; border-radius: 8px; color: #000; }
.spin { width: 11px; height: 16px; fill: none; stroke: #333; stroke-width: 1.400; margin-bottom: 4px; }
.spin rect, .spin .mid { stroke: #ddd; stroke-width: 1; }
.check { display: flex; align-items: center; height: 26px; margin: 0 0 17px 13.500px; color: #4a5568; white-space: nowrap; }
.check > .ico { margin: 0 9px 0 14px; opacity: .8; }
.tick { display: flex; align-items: center; justify-content: center; width: 26px; height: 26px; border-radius: 4px; background: #3182ce; color: #fff; }
.tick .ico { width: 12px; height: 12px; stroke-width: 1.600; opacity: .8; }
.btn-find { width: 278px; height: 58px; margin: 25px auto 0; gap: 13px; font-weight: 700; letter-spacing: .45px; background: linear-gradient(135deg, #4cbb7c, #3d9e69); box-shadow: 0 7px 20px rgba(72, 187, 120, .35); }

/* map and results */
.result { display: flex; height: 654px; border-radius: 12px; overflow: hidden; background: #fff; box-shadow: 0 5px 8px rgba(0, 0, 0, .05); }
.map { position: relative; width: 1065px; flex: none; }
.map-canvas { display: block; width: 1065px; height: 654px; font-family: Roboto, sans-serif; }
.land { fill: #f5f3f5; }
.shop { fill: #f9f0d9; }
.care { fill: #fde6e5; }
.park { fill: #c3f0d3; }
.water { fill: none; stroke: #8edcf0; stroke-width: .9; stroke-linejoin: round; }
.water .w2 { stroke-width: 1.500; }
.water .pond { fill: #8edcf0; }
pattern path { fill: none; stroke: #cbd8e2; stroke-width: .7; }
.rail { fill: none; stroke: #dcdcdf; stroke-width: .8; }
.runway { fill: none; stroke: #e8edfb; stroke-width: 3; }
.paths { fill: none; stroke: #86d3a5; stroke-width: .6; stroke-dasharray: 2 1; }
.roads { fill: none; stroke: #d3dee6; stroke-width: 2.700; stroke-linejoin: round; }
.roads .wide { stroke-width: 4; }
.roads.thin { stroke-width: 1.500; }
.hwy-edge, .hwy { fill: none; stroke-linejoin: round; }
.hwy-edge { stroke: #6f8bb0; stroke-width: 6.200; }
.hwy-edge .slim { stroke-width: 2.300; stroke: #8aa4c2; }
/* the lighter fill repeats each highway over its darker casing */
#hwy, #hwy2 { stroke: inherit; stroke-width: inherit; }
.hwy { stroke: #8da7c4; stroke-width: 5; }
.labels text, .road-names text { paint-order: stroke; stroke: #fff; stroke-width: 1.800; stroke-linejoin: round; }
.labels { font-size: 9px; font-weight: 500; fill: #2b2f32; }
.minor { font-size: 7.900px; fill: #565a5f; }
.road-names { font-size: 8.700px; fill: #2f455e; }
.road-names .tight { font-size: 7.900px; }
.road-names .city { font-size: 10px; font-weight: 500; }
.shields { font-size: 6.600px; font-weight: 500; text-anchor: middle; }
.green rect { fill: #689f38; }
.green text { fill: #ffe168; }
.gold rect { fill: #fdd663; stroke: #d8ab31; stroke-width: .5; }
.gold text { fill: #6b4e10; }
.bus-bg { fill: #4b6378; stroke: #fff; stroke-width: 1.300; }
.bus-body { fill: #fff; }
.bus-win { fill: #4b6378; }
.route .line { fill: none; stroke: #3498db; stroke-width: 3; opacity: .8; }
.route .dash { fill: none; stroke: #3498db; stroke-width: 3; stroke-dasharray: 7 7; }
.route circle { stroke: #fff; stroke-width: 1.500; }
.route text { fill: #fff; font: 700 9px Roboto, sans-serif; text-anchor: middle; }
.brand { font: 500 13.500px "Open Sans", Roboto, sans-serif; fill: #fff; stroke: #8d8d8d; stroke-width: 1.200; paint-order: stroke; }
.map-btn { position: absolute; right: 10px; width: 40px; background: #fff; box-shadow: 0 1px 4px rgba(0, 0, 0, .18); display: flex; flex-direction: column; align-items: center; justify-content: center; }
.map-btn svg { fill: none; stroke: #666; stroke-width: 2.800; }
.map-full { top: 10px; height: 40px; border-radius: 3px; }
.map-full svg { width: 19px; height: 19px; }
.map-pan { top: 491px; height: 40px; border-radius: 50%; }
.map-pan svg { width: 23px; height: 23px; }
.map-zoom { top: 563px; height: 81px; border-radius: 3px; gap: 25px; }
.map-zoom svg { width: 16px; height: 16px; stroke-width: 2.200; }
.map-zoom::before { content: ""; position: absolute; left: 5px; right: 5px; top: 40px; height: 1px; background: #e6e6e6; }

.panel { flex: 1; padding: 27px 27px 0; border-left: 2px solid #dbe3ee; overflow: hidden; }
.panel h3 { display: flex; align-items: center; gap: 9px; font-size: 18px; line-height: 31px; }
.panel h3 .ico { width: 22px; height: 22px; stroke-width: 1.300; }
.panel-head { display: flex; justify-content: space-between; padding-bottom: 18px; border-bottom: 2px solid #e2e8f0; }
.badge { width: 94px; border-radius: 16px; background: #3182ce; color: #fff; font-weight: 600; line-height: 32px; height: 31px; text-align: center; }
.stats { display: grid; grid-template-columns: 230px 231px; gap: 18px; margin: 27px 0 22px; }
.stat { display: flex; align-items: center; gap: 13px; height: 84.500px; padding-left: 18px; border-radius: 8px; background: #f7fafc; white-space: nowrap; }
.stat-ico { display: flex; align-items: center; justify-content: center; width: 36px; height: 36px; border-radius: 8px; background: #fff; color: #718096; }
.stat p { color: #718096; font-weight: 500; line-height: 26px; }
.stat b { display: block; font-weight: 500; line-height: 27px; }
.list { display: flex; flex-direction: column; gap: 14px; margin-top: 14px; }
.stop { display: flex; gap: 14px; height: 106px; padding: 13px; border-radius: 8px; flex: none; }
.stop h4 { font-size: 18px; font-weight: 500; line-height: 27px; margin: -2px 0 4px; }
.stop p { display: flex; align-items: center; gap: 4px; color: #718096; }
.stop p .ico { width: 16px; height: 16px; opacity: .8; margin-bottom: 3px; }
.num { width: 36px; height: 36px; border-radius: 50%; background: #3182ce; color: #fff; font-weight: 700; font-size: 18px; line-height: 37px; text-align: center; flex: none; }
.stop-start { background: #fed7d7; }
.stop-start .num { background: #e53e3e; }
.stop-end { background: #c6f6d5; }
.stop-end .num { background: #38a169; }

.devtab { display: flex; justify-content: center; position: absolute; left: 811px; bottom: 0; width: 32px; height: 31px; padding-top: 5px; border: 2px solid #eee; border-bottom: 0; border-radius: 16px 16px 0 0; background: #fff; }
.devtab svg { width: 22px; height: 15px; fill: none; stroke: #b5b5b5; stroke-width: 2; }
```
